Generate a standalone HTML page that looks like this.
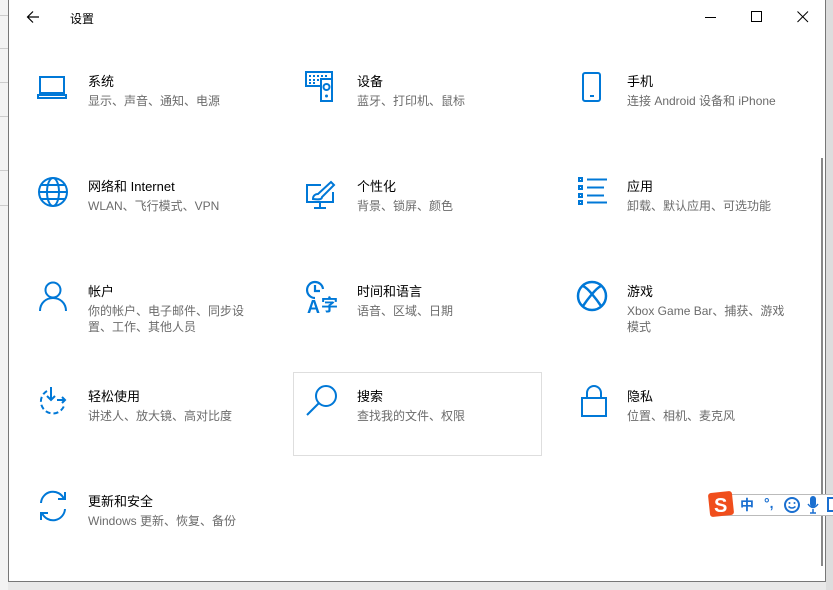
<!DOCTYPE html>
<html><head><meta charset="utf-8"><style>
*{margin:0;padding:0;box-sizing:border-box}
body{width:833px;height:590px;overflow:hidden;background:#e9e9e9;font-family:"Liberation Sans","Noto Sans CJK SC",sans-serif;position:relative}
.bg{position:absolute;left:0;top:0;width:8px;height:590px;background:#f3f3f3}
.bg i{position:absolute;left:0;width:8px;height:1px;background:#ccc}
.win{position:absolute;left:8px;top:0;width:818px;height:582px;background:#fff;border-left:1px solid #777;border-right:1px solid #777;border-bottom:1px solid #777}
.shadow{position:absolute;left:826px;top:0;width:7px;height:590px;background:#ddd}
.title{position:absolute;left:61px;top:10px;font-size:12px;color:#000}
.back{position:absolute;left:17px;top:10px}
.ctl{position:absolute;top:10px}
.t{position:absolute;font-size:13px;color:#000;line-height:16px}
.s{position:absolute;font-size:12px;color:#6b6b6b;line-height:16px;width:170px}
svg.i{position:absolute}
.sel{position:absolute;left:284px;top:372px;width:249px;height:84px;border:1.5px solid #dedede}
.sb{position:absolute;left:812px;top:158px;width:2px;height:408px;background:#888}
.ime{position:absolute;left:714px;top:494px;width:119px;height:22px;background:#fff;border:1px solid #bbb;border-right:none}
</style></head><body>
<div class="bg"><i style="top:15px"></i><i style="top:48px"></i><i style="top:82px"></i><i style="top:116px"></i><i style="top:170px"></i><i style="top:205px"></i></div>
<div class="shadow"></div>
<div class="win">
<svg class="back" width="14" height="14" viewBox="0 0 14 14"><path d="M13 7H1.5M7 1.5L1.5 7 7 12.5" stroke="#000" stroke-width="1.2" fill="none"/></svg>
<div class="title">设置</div>
<svg class="ctl" style="left:695px" width="14" height="14"><path d="M1 7.5H12" stroke="#000"/></svg>
<svg class="ctl" style="left:741px" width="14" height="14"><rect x="1.5" y="1.5" width="10" height="10" stroke="#000" fill="none"/></svg>
<svg class="ctl" style="left:787px" width="14" height="14"><path d="M1.5 1.5L12 12M12 1.5L1.5 12" stroke="#000"/></svg>

<div class="sel"></div>
<div class="sb"></div>

<svg class="i" style="left:28px;top:75px" width="32" height="26" viewBox="0 0 32 26"><rect x="3" y="2" width="24" height="16" fill="none" stroke="#0078d7" stroke-width="2"/><path d="M1 20h28v3H1z" fill="none" stroke="#0078d7" stroke-width="2"/></svg>
<div class="t" style="left:79px;top:74px">系统</div><div class="s" style="left:79px;top:93px">显示、声音、通知、电源</div>

<svg class="i" style="left:296px;top:71px" width="32" height="32" viewBox="0 0 32 32"><rect x="1" y="1" width="26" height="14" fill="none" stroke="#0078d7" stroke-width="2"/><path d="M4 5h2M8 5h2M12 5h2M16 5h2M20 5h2M4 9h2M8 9h2M12 9h2M4 12h2M8 12h2" stroke="#0078d7" stroke-width="2"/><rect x="16" y="8" width="11" height="22" fill="#fff" stroke="#0078d7" stroke-width="2"/><circle cx="21.5" cy="16" r="3" fill="none" stroke="#0078d7" stroke-width="2"/><circle cx="21.5" cy="25" r="1.5" fill="#0078d7"/></svg>
<div class="t" style="left:348px;top:74px">设备</div><div class="s" style="left:348px;top:93px">蓝牙、打印机、鼠标</div>

<svg class="i" style="left:571px;top:71px" width="24" height="32" viewBox="0 0 24 32"><rect x="3" y="2" width="17" height="28" rx="2" fill="none" stroke="#0078d7" stroke-width="2"/><path d="M10 25h4" stroke="#0078d7" stroke-width="2"/></svg>
<div class="t" style="left:618px;top:74px">手机</div><div class="s" style="left:618px;top:93px;width:200px">连接 Android 设备和 iPhone</div>

<svg class="i" style="left:28px;top:176px" width="32" height="32" viewBox="0 0 32 32"><g fill="none" stroke="#0078d7" stroke-width="2"><circle cx="16" cy="16" r="14"/><ellipse cx="16" cy="16" rx="6" ry="14"/><path d="M2 16h28M4.5 9h23M4.5 23h23"/></g></svg>
<div class="t" style="left:79px;top:179px">网络和 Internet</div><div class="s" style="left:79px;top:198px">WLAN、飞行模式、VPN</div>

<svg class="i" style="left:296px;top:180px" width="32" height="30" viewBox="0 0 32 30"><g fill="none" stroke="#0078d7" stroke-width="2"><path d="M16 5H2v17h26V12"/><path d="M15 22v5M9 28h12"/><path d="M8 19c0-4 3-5 5-5l13-12 3 3-12 12c0 2-2 3-9 2z"/></g></svg>
<div class="t" style="left:348px;top:179px">个性化</div><div class="s" style="left:348px;top:198px">背景、锁屏、颜色</div>

<svg class="i" style="left:568px;top:176px" width="32" height="30" viewBox="0 0 32 30"><g fill="none" stroke="#0078d7" stroke-width="2"><rect x="2" y="2" width="3" height="3"/><rect x="2" y="10" width="3" height="3"/><rect x="2" y="18" width="3" height="3"/><rect x="2" y="25" width="3" height="3"/><path d="M10 3.5h20M10 11.5h17M10 19.5h17M10 26.5h20"/></g></svg>
<div class="t" style="left:618px;top:179px">应用</div><div class="s" style="left:618px;top:198px">卸载、默认应用、可选功能</div>

<svg class="i" style="left:28px;top:280px" width="32" height="32" viewBox="0 0 32 32"><g fill="none" stroke="#0078d7" stroke-width="2"><circle cx="16" cy="10" r="7.5"/><path d="M3 31c0-8 6-13 13-13s13 5 13 13"/></g></svg>
<div class="t" style="left:79px;top:284px">帐户</div><div class="s" style="left:79px;top:303px;width:160px">你的帐户、电子邮件、同步设置、工作、其他人员</div>

<svg class="i" style="left:296px;top:280px" width="36" height="34" viewBox="0 0 36 34"><g fill="none" stroke="#0078d7" stroke-width="2.2"><path d="M10 18A8 8 0 1 1 18 9"/><path d="M10 5v6h5"/></g><text x="2" y="33" font-family="Liberation Sans" font-weight="bold" font-size="18" fill="#0078d7">A</text><text x="16" y="31" font-family="Noto Sans CJK SC" font-weight="bold" font-size="17" fill="#0078d7">字</text></svg>
<div class="t" style="left:348px;top:284px">时间和语言</div><div class="s" style="left:348px;top:303px">语音、区域、日期</div>

<svg class="i" style="left:567px;top:280px" width="32" height="32" viewBox="0 0 32 32"><g fill="none" stroke="#0078d7" stroke-width="2.5"><circle cx="16" cy="16" r="14"/><path d="M7 6c5 2 14 14 18 20M25 6c-5 2-14 14-18 20"/></g></svg>
<div class="t" style="left:618px;top:284px">游戏</div><div class="s" style="left:618px;top:303px;width:165px">Xbox Game Bar、捕获、游戏模式</div>

<svg class="i" style="left:28px;top:386px" width="34" height="32" viewBox="0 0 34 32"><g fill="none" stroke="#0078d7" stroke-width="2"><path d="M10 5A12 12 0 1 0 27 20" stroke-dasharray="5 3"/><path d="M14 1v13M10 10l4 4 4-4M20 14h8M25 11l3 3-3 3"/></g></svg>
<div class="t" style="left:79px;top:389px">轻松使用</div><div class="s" style="left:79px;top:408px">讲述人、放大镜、高对比度</div>

<svg class="i" style="left:296px;top:384px" width="34" height="34" viewBox="0 0 34 34"><g fill="none" stroke="#0078d7" stroke-width="2"><circle cx="21" cy="12" r="10"/><path d="M14 19L2 31"/></g></svg>
<div class="t" style="left:348px;top:389px">搜索</div><div class="s" style="left:348px;top:408px">查找我的文件、权限</div>

<svg class="i" style="left:570px;top:384px" width="30" height="34" viewBox="0 0 30 34"><g fill="none" stroke="#0078d7" stroke-width="2"><path d="M8 14V9a7 7 0 0 1 14 0v5"/><rect x="3" y="14" width="24" height="18"/></g></svg>
<div class="t" style="left:618px;top:389px">隐私</div><div class="s" style="left:618px;top:408px">位置、相机、麦克风</div>

<svg class="i" style="left:28px;top:490px" width="32" height="32" viewBox="0 0 32 32"><g fill="none" stroke="#0078d7" stroke-width="2"><path d="M4 13A12 12 0 0 1 27 9"/><path d="M28 2v7h-7"/><path d="M28 19A12 12 0 0 1 5 23"/><path d="M4 30v-7h7"/></g></svg>
<div class="t" style="left:79px;top:494px">更新和安全</div><div class="s" style="left:79px;top:513px">Windows 更新、恢复、备份</div>
</div>

<div class="ime"></div>
<svg style="position:absolute;left:707px;top:490px" width="28" height="28" viewBox="0 0 28 28"><rect x="2" y="2" width="24" height="24" rx="3" fill="#f04e1c" transform="rotate(-6 14 14)"/><text x="7" y="22" font-family="Liberation Sans" font-weight="bold" font-size="20" fill="#fff">S</text></svg>
<div style="position:absolute;left:740px;top:496px;font-size:14px;font-weight:bold;color:#1a6fd0;font-family:'Noto Sans CJK SC',sans-serif;line-height:18px">中</div>
<div style="position:absolute;left:764px;top:494px;font-size:14px;font-weight:bold;color:#1a6fd0;line-height:18px">°,</div>
<svg style="position:absolute;left:783px;top:496px" width="18" height="18"><circle cx="9" cy="9" r="7" fill="none" stroke="#1a6fd0" stroke-width="2"/><circle cx="6.5" cy="7" r="1" fill="#1a6fd0"/><circle cx="11.5" cy="7" r="1" fill="#1a6fd0"/><path d="M5.5 10.5q3.5 3 7 0" stroke="#1a6fd0" stroke-width="1.5" fill="none"/></svg>
<svg style="position:absolute;left:806px;top:495px" width="14" height="20"><rect x="4" y="1" width="6" height="11" rx="3" fill="#1a6fd0"/><path d="M2 9q5 7 10 0M7 14v4M4 18h6" stroke="#1a6fd0" stroke-width="1.5" fill="none"/></svg>
<svg style="position:absolute;left:827px;top:497px" width="6" height="16"><rect x="1" y="1" width="6" height="13" fill="none" stroke="#1a6fd0" stroke-width="2"/></svg>
</body></html>
